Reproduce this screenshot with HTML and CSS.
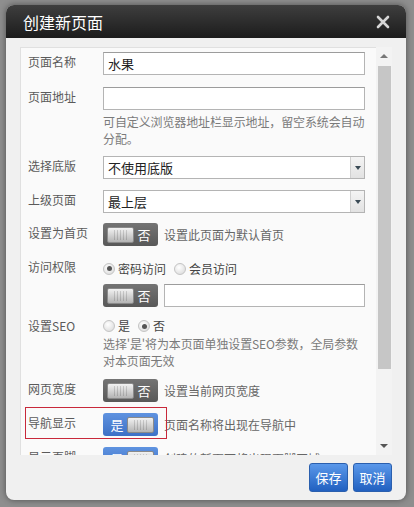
FILE: index.html
```html
<!DOCTYPE html>
<html lang="zh">
<head>
<meta charset="utf-8">
<title>创建新页面</title>
<link rel="stylesheet" href="styles.css">
</head>
<body>
<div class="dialog">
  <div class="hd">
    <span class="title">创建新页面</span>
    <svg class="close" width="14" height="14" viewBox="0 0 14 14"><path d="M2 2L12 12M12 2L2 12" stroke="#d6d6d6" stroke-width="2.6" stroke-linecap="round"/></svg>
  </div>
  <div class="bd">
    <div class="scrollwrap">
      <div class="panel">
        <div class="row r1">
          <div class="lbl">页面名称</div>
          <div class="ctl"><div class="inp">水果</div></div>
        </div>
        <div class="row r2">
          <div class="lbl">页面地址</div>
          <div class="ctl">
            <div class="inp"></div>
            <div class="help h1">可自定义浏览器地址栏显示地址，留空系统会自动分配。</div>
          </div>
        </div>
        <div class="row r3">
          <div class="lbl">选择底版</div>
          <div class="ctl"><div class="sel"><span class="st">不使用底版</span><span class="arr"><i></i></span></div></div>
        </div>
        <div class="row r4">
          <div class="lbl">上级页面</div>
          <div class="ctl"><div class="sel"><span class="st">最上层</span><span class="arr"><i></i></span></div></div>
        </div>
        <div class="row r5">
          <div class="lbl">设置为首页</div>
          <div class="ctl inl">
            <span class="tog off"><span class="knob"></span><span class="tt">否</span></span>
            <span class="note">设置此页面为默认首页</span>
          </div>
        </div>
        <div class="row r6">
          <div class="lbl">访问权限</div>
          <div class="ctl inl">
            <span class="rd on"></span><span class="rt">密码访问</span>
            <span class="rd"></span><span class="rt">会员访问</span>
          </div>
        </div>
        <div class="row r7">
          <div class="lbl"></div>
          <div class="ctl inl">
            <span class="tog off"><span class="knob"></span><span class="tt">否</span></span>
            <div class="inp grow"></div>
          </div>
        </div>
        <div class="row r8">
          <div class="lbl short">设置SEO</div>
          <div class="ctl">
            <div class="inl short">
              <span class="rd"></span><span class="rt">是</span>
              <span class="rd on"></span><span class="rt">否</span>
            </div>
            <div class="help h2">选择'是'将为本页面单独设置SEO参数，全局参数对本页面无效</div>
          </div>
        </div>
        <div class="row r9">
          <div class="lbl">网页宽度</div>
          <div class="ctl inl">
            <span class="tog off"><span class="knob"></span><span class="tt">否</span></span>
            <span class="note">设置当前网页宽度</span>
          </div>
        </div>
        <div class="row r10 marked">
          <div class="lbl">导航显示</div>
          <div class="ctl inl">
            <span class="tog on"><span class="tt">是</span><span class="knob"></span></span>
            <span class="note">页面名称将出现在导航中</span>
          </div>
        </div>
        <div class="row r11">
          <div class="lbl">显示页脚</div>
          <div class="ctl inl">
            <span class="tog on"><span class="tt">是</span><span class="knob"></span></span>
            <span class="note">创建的新页面将出现页脚区域</span>
          </div>
        </div>
      </div>
      <div class="sbar">
        <span class="up"></span>
        <span class="thumb"></span>
        <span class="dn"></span>
      </div>
    </div>
    <div class="ft">
      <button class="btn">保存</button>
      <button class="btn">取消</button>
    </div>
  </div>
</div>
</body>
</html>
```
FILE: styles.css
```css
html, body {
  margin: 0;
  padding: 0;
}
body {
  width: 414px;
  height: 507px;
  background: #8e8e8e;
  font-family: "Noto Sans CJK SC", "Liberation Sans", sans-serif;
  overflow: hidden;
}
.dialog {
  margin: 5px 0 0 6px;
  width: 400px;
  height: 495px;
  border-radius: 8px;
  overflow: hidden;
  box-shadow: 0 0 6px rgba(0,0,0,0.45);
  background: #f0f0f0;
  display: flex;
  flex-direction: column;
}
.hd {
  height: 33px;
  flex: none;
  background: linear-gradient(#3e3e3e, #1c1c1c);
  display: flex;
  align-items: center;
  justify-content: space-between;
  padding: 0 16px 0 17px;
}
.title {
  color: #fff;
  font-size: 16px;
  line-height: 20px;
}
.close { display: block; margin-top: 1px; }
.bd {
  flex: 1;
  display: flex;
  flex-direction: column;
  padding: 9px 14px 0 14px;
}
.scrollwrap {
  display: flex;
  height: 408px;
  flex: none;
}
.panel {
  width: 356px;
  box-sizing: border-box;
  height: 408px;
  overflow: hidden;
  background: #fafafa;
  border-top: 1px solid #e0e0e0;
  border-left: 1px solid #e0e0e0;
  padding: 4px 11px 0 7px;
}
.row {
  display: flex;
  align-items: flex-start;
  position: relative;
}
.lbl {
  width: 75px;
  flex: none;
  font-size: 12px;
  line-height: 20px;
  color: #5a5a5a;
}
.ctl { flex: 1; min-width: 0; }
.inl {
  display: flex;
  align-items: center;
  height: 23px;
}
.inp {
  height: 23px;
  box-sizing: border-box;
  border: 1px solid #b4b4b4;
  border-top-color: #9c9c9c;
  background: #fff;
  font-size: 13px;
  line-height: 21px;
  padding-left: 4px;
  color: #222;
}
.inp.grow { flex: 1; margin-left: 6px; }
.help {
  font-size: 12px;
  line-height: 17px;
  color: #7a7a7a;
  letter-spacing: -0.12px;
}
.h1 { margin-top: 3px; }
.sel {
  height: 23px;
  box-sizing: border-box;
  border: 1px solid #b4b4b4;
  background: #fff;
  display: flex;
  align-items: stretch;
}
.st {
  flex: 1;
  font-size: 13px;
  line-height: 21px;
  padding-left: 4px;
  color: #222;
}
.arr {
  width: 13px;
  border-left: 1px solid #d0d0d0;
  background: linear-gradient(#f4f4f4, #e2e2e2);
  display: flex;
  align-items: center;
  justify-content: center;
}
.arr i {
  width: 0; height: 0;
  border-left: 3px solid transparent;
  border-right: 3px solid transparent;
  border-top: 4px solid #3a4a55;
}
.r1 { margin-bottom: 12px; }
.r2 { margin-bottom: 9px; }
.r3 { margin-bottom: 11px; }
.r4 { margin-bottom: 10px; }
.r5 { margin-bottom: 11px; }
.r6 { margin-bottom: 4px; }
.r7 { margin-bottom: 10px; }
.r8 { margin-bottom: 10px; }
.r9 { margin-bottom: 11px; }
.r10 { margin-bottom: 11px; }
.lbl.short { line-height: 18px; }
.inl.short { height: 18px; }
.note {
  font-size: 12px;
  color: #666;
  margin-left: 6px;
  white-space: nowrap;
}
.tog {
  flex: none;
  width: 55px;
  height: 23px;
  border-radius: 3px;
  box-sizing: border-box;
  display: flex;
  align-items: center;
  padding: 0 4px;
  color: #fff;
  font-size: 13px;
}
.tog.off {
  background: linear-gradient(#747474, #585858);
}
.tog.on {
  background: linear-gradient(#5f93e0, #3d70c6);
}
.tt {
  flex: 1;
  text-align: center;
  line-height: 23px;
}
.knob {
  width: 27px;
  height: 16px;
  box-sizing: border-box;
  border-radius: 2px;
  border: 1px solid #8a8a8a;
  background: linear-gradient(#f2f2f2, #b4b4b4);
  display: flex;
  align-items: center;
  justify-content: center;
}
.knob::after {
  content: "";
  width: 13px;
  height: 10px;
  background: repeating-linear-gradient(90deg, rgba(0,0,0,0.14) 0 1px, transparent 1px 3px);
}
.rd {
  width: 12px;
  height: 12px;
  box-sizing: border-box;
  border-radius: 50%;
  border: 1px solid #c4c4c4;
  background: radial-gradient(circle at 40% 35%, #ffffff, #d6d6d6);
  display: flex;
  align-items: center;
  justify-content: center;
  flex: none;
}
.rd.on::after {
  content: "";
  width: 5px;
  height: 5px;
  border-radius: 50%;
  background: #555;
}
.rt {
  font-size: 12px;
  color: #444;
  margin: 0 8px 0 3px;
  line-height: 18px;
}
.marked::before {
  content: "";
  position: absolute;
  left: -3px;
  top: -6px;
  width: 142px;
  height: 32px;
  box-sizing: border-box;
  border: 1px solid #c8283a;
  pointer-events: none;
}
.sbar {
  width: 16px;
  height: 408px;
  background: #f3f3f3;
  position: relative;
  display: flex;
  flex-direction: column;
  align-items: center;
}
.up {
  margin-top: 7px;
  width: 0; height: 0;
  border-left: 4px solid transparent;
  border-right: 4px solid transparent;
  border-bottom: 4px solid #777;
}
.thumb {
  margin-top: 8px;
  width: 13px;
  height: 303px;
  background: #c6c6c6;
}
.dn {
  margin-top: auto;
  margin-bottom: 7px;
  width: 0; height: 0;
  border-left: 4px solid transparent;
  border-right: 4px solid transparent;
  border-top: 4px solid #555;
}
.ft {
  display: flex;
  justify-content: flex-end;
  gap: 5px;
  padding-top: 8px;
}
.btn {
  height: 29px;
  width: 39px;
  padding: 0;
  border: 1px solid #2a5fae;
  border-radius: 3px;
  background: linear-gradient(#5a98ea, #2160c0);
  color: #fff;
  font-family: "Noto Sans CJK SC", sans-serif;
  font-size: 13px;
}
```
